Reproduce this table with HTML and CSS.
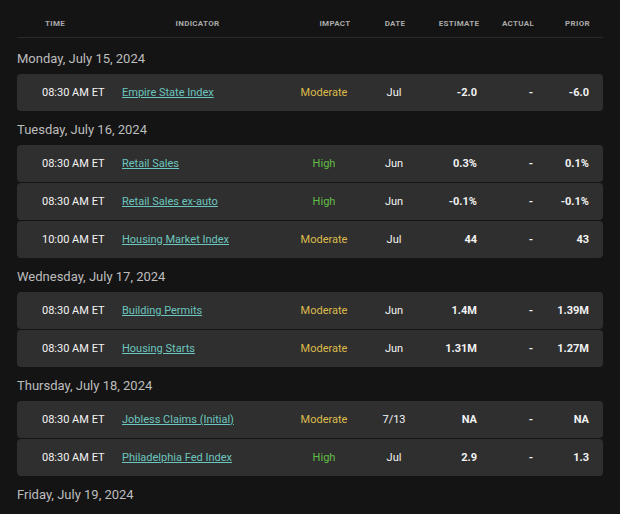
FILE: index.html
```html
<!DOCTYPE html>
<html lang="en">
<head>
<meta charset="utf-8">
<title>Economic Calendar</title>
<link rel="stylesheet" href="styles.css">
</head>
<body>
<div class="calendar">
  <div class="head">
    <span>Time</span>
    <span>Indicator</span>
    <span>Impact</span>
    <span>Date</span>
    <span>Estimate</span>
    <span>Actual</span>
    <span class="h-prior">Prior</span>
  </div>

  <div class="day">Monday, July 15, 2024</div>
  <div class="row">
    <span class="time">08:30 AM ET</span>
    <a class="ind" href="#">Empire State Index</a>
    <span class="impact mod">Moderate</span>
    <span class="date">Jul</span>
    <span class="num">-2.0</span>
    <span class="num">-</span>
    <span class="num">-6.0</span>
  </div>

  <div class="day">Tuesday, July 16, 2024</div>
  <div class="row">
    <span class="time">08:30 AM ET</span>
    <a class="ind" href="#">Retail Sales</a>
    <span class="impact high">High</span>
    <span class="date">Jun</span>
    <span class="num">0.3%</span>
    <span class="num">-</span>
    <span class="num">0.1%</span>
  </div>
  <div class="row">
    <span class="time">08:30 AM ET</span>
    <a class="ind" href="#">Retail Sales ex-auto</a>
    <span class="impact high">High</span>
    <span class="date">Jun</span>
    <span class="num">-0.1%</span>
    <span class="num">-</span>
    <span class="num">-0.1%</span>
  </div>
  <div class="row">
    <span class="time">10:00 AM ET</span>
    <a class="ind" href="#">Housing Market Index</a>
    <span class="impact mod">Moderate</span>
    <span class="date">Jul</span>
    <span class="num">44</span>
    <span class="num">-</span>
    <span class="num">43</span>
  </div>

  <div class="day">Wednesday, July 17, 2024</div>
  <div class="row">
    <span class="time">08:30 AM ET</span>
    <a class="ind" href="#">Building Permits</a>
    <span class="impact mod">Moderate</span>
    <span class="date">Jun</span>
    <span class="num">1.4M</span>
    <span class="num">-</span>
    <span class="num">1.39M</span>
  </div>
  <div class="row">
    <span class="time">08:30 AM ET</span>
    <a class="ind" href="#">Housing Starts</a>
    <span class="impact mod">Moderate</span>
    <span class="date">Jun</span>
    <span class="num">1.31M</span>
    <span class="num">-</span>
    <span class="num">1.27M</span>
  </div>

  <div class="day">Thursday, July 18, 2024</div>
  <div class="row">
    <span class="time">08:30 AM ET</span>
    <a class="ind" href="#">Jobless Claims (Initial)</a>
    <span class="impact mod">Moderate</span>
    <span class="date">7/13</span>
    <span class="num">NA</span>
    <span class="num">-</span>
    <span class="num">NA</span>
  </div>
  <div class="row">
    <span class="time">08:30 AM ET</span>
    <a class="ind" href="#">Philadelphia Fed Index</a>
    <span class="impact high">High</span>
    <span class="date">Jul</span>
    <span class="num">2.9</span>
    <span class="num">-</span>
    <span class="num">1.3</span>
  </div>

  <div class="day">Friday, July 19, 2024</div>
</div>
</body>
</html>
```

FILE: styles.css
```css
html, body {
  margin: 0;
  padding: 0;
  background: #141414;
  overflow: hidden;
}
body {
  font-family: Roboto, "Liberation Sans", Arial, sans-serif;
  color: #ffffff;
}
.calendar {
  margin: 0 17px;
}
.head {
  display: grid;
  grid-template-columns: 76px 209px 66px 54px 74px 44px 1fr;
  align-items: center;
  height: 28px;
  padding-top: 9px;
  margin-bottom: 3px;
  border-bottom: 1px solid #2a2a2a;
  font-size: 8px;
  font-weight: 700;
  letter-spacing: 0.3px;
  text-transform: uppercase;
  color: #a9a9a9;
  text-align: center;
}
.head .h-prior {
  padding-left: 12px;
}
.day {
  padding-top: 9px;
  margin-bottom: 6px;
  font-size: 13px;
  line-height: 18px;
  color: #bdbdbd;
}
.row {
  display: grid;
  grid-template-columns: 80px 172px 60px 80px 43px 56px 56px;
  align-items: center;
  height: 37px;
  padding: 0 14px 0 25px;
  margin-bottom: 1px;
  background: #2f2f2f;
  border-radius: 4px;
  font-size: 11px;
}
.time {
  font-weight: 400;
  color: #f4f4f4;
}
.ind {
  color: #6cc5be;
  text-decoration: underline;
  text-underline-offset: 1px;
}
.impact {
  text-align: center;
}
.mod {
  color: #dcbb4d;
}
.high {
  color: #62bd45;
}
.date {
  text-align: center;
  font-weight: 400;
  color: #f4f4f4;
}
.num {
  text-align: right;
  font-weight: 700;
  color: #f2f2f2;
}
```
